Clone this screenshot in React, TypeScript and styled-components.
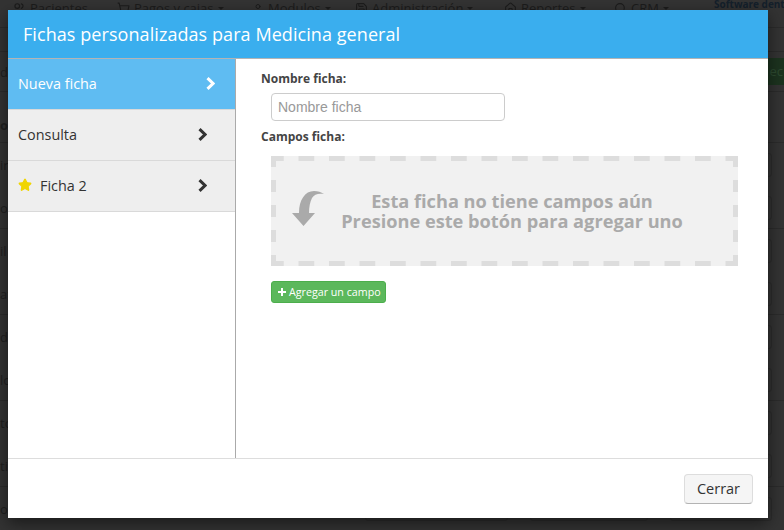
import styled, { createGlobalStyle } from "styled-components";
import { Home, Save, Search, ShoppingCart, Star, User, Users } from "lucide-react";

const GlobalStyle = createGlobalStyle`
  html, body {
    margin: 0;
    height: 100%;
    overflow: hidden;
    background: #333333;
    font-family: "Open Sans", "Liberation Sans", sans-serif;
  }
`;

const Page = styled.div`
  position: relative;
  width: 784px;
  height: 530px;
  overflow: hidden;
  color: #1f1f1f;
  background: #333333;
`;

const TopNav = styled.div`
  display: flex;
  align-items: flex-start;
  height: 28px;
  padding: 1px 0 0 12px;
  box-sizing: border-box;
  border-bottom: 1px solid #2b2b2b;
  font-size: 13px;
  line-height: 15px;
`;

const NavItem = styled.div<{ $width: number }>`
  display: flex;
  flex: none;
  align-items: center;
  gap: 4px;
  width: ${({ $width }) => $width}px;
  color: #1c1c1c;
`;

const Caret = styled.span`
  width: 0;
  height: 0;
  border: 3px solid transparent;
  border-top-color: #1c1c1c;
  border-bottom: 0;
`;

const Brand = styled.div`
  flex: none;
  margin: -1px 0 0 40px;
  font-size: 10px;
  font-weight: 700;
  line-height: 8px;
  white-space: nowrap;
  color: #14202b;
`;

const SubBar = styled.div`
  height: 24px;
  box-sizing: border-box;
  border-bottom: 1px solid #2b2b2b;
`;

const BannerRow = styled.div`
  display: flex;
  align-items: center;
  justify-content: space-between;
  height: 40px;
  box-sizing: border-box;
  border-bottom: 1px solid #2b2b2b;
  font-size: 13px;
`;

const Banner = styled.div`
  width: 100px;
  height: 27px;
  box-sizing: border-box;
  padding-right: 1px;
  font-size: 13px;
  line-height: 27px;
  text-align: right;
  color: #2d4a30;
  background: #1c331f;
`;

const HeadRow = styled.div`
  display: flex;
  align-items: flex-end;
  height: 51px;
  padding-bottom: 8px;
  box-sizing: border-box;
  border-bottom: 1px solid #2b2b2b;
  font-size: 13px;
  font-weight: 700;
`;

const Group = styled.div`
  height: 86px;
  box-sizing: border-box;
  border-bottom: 1px solid #2b2b2b;
`;

const Line = styled.div`
  display: flex;
  height: 43px;
  padding-top: 10px;
  box-sizing: border-box;
`;

const LineLabel = styled.span`
  flex: none;
  width: 365px;
  font-size: 13px;
  line-height: 24px;
`;

const Card = styled.div<{ $width: number }>`
  flex: none;
  width: ${({ $width }) => $width}px;
  height: 24px;
  margin-right: 22px;
  box-sizing: border-box;
  border: 1px solid #2c2c2c;
  border-radius: 3px;
`;

const Modal = styled.div`
  position: absolute;
  top: 10px;
  left: 8px;
  display: flex;
  flex-direction: column;
  width: 760px;
  height: 508px;
  background: #ffffff;
  box-shadow: 0 5px 15px rgba(0, 0, 0, 0.5);
`;

const Header = styled.header`
  display: flex;
  flex: none;
  align-items: center;
  height: 49px;
  padding-left: 15px;
  box-sizing: border-box;
  border-bottom: 1px solid #b4b4b4;
  font-size: 18px;
  letter-spacing: 0.07px;
  color: #ffffff;
  background: #3aaeee;
`;

const Body = styled.div`
  display: flex;
  flex: 1;
  min-height: 0;
`;

const Sidebar = styled.nav`
  width: 228px;
  box-sizing: border-box;
  border-right: 1px solid #aaaaaa;
`;

const SideItem = styled.div<{ $active?: boolean }>`
  display: flex;
  align-items: center;
  height: 51px;
  padding: 0 ${({ $active }) => ($active ? 20 : 28)}px 2px 10px;
  box-sizing: border-box;
  border-bottom: 1px solid #d9d9d9;
  font-size: 14.4px;
  color: ${({ $active }) => ($active ? "#ffffff" : "#333333")};
  background: ${({ $active }) => ($active ? "#5fbcf2" : "#eeeeee")};
`;

const SideLabel = styled.span`
  flex: 1;
`;

const StarIcon = styled(Star)`
  margin-right: 8px;
  color: #f0d500;
  fill: #f0d500;
`;

const Content = styled.main`
  flex: 1;
  padding: 11px 30px 0 25px;
`;

const FieldLabel = styled.div`
  margin-bottom: 6px;
  font-size: 12px;
  font-weight: 700;
  line-height: 17px;
  color: #444444;
`;

const NameInput = styled.input`
  display: block;
  width: 234px;
  height: 28px;
  margin: 0 0 7px 10px;
  padding: 0 6px;
  box-sizing: border-box;
  border: 1px solid #cccccc;
  border-radius: 4px;
  font-family: "Liberation Sans", sans-serif;
  font-size: 14px;
  outline: none;

  &::placeholder {
    color: #999999;
    opacity: 1;
  }
`;

const dashEdge = "#dddddd";

const EmptyBox = styled.div`
  display: flex;
  align-items: center;
  width: 467px;
  height: 110px;
  margin: 11px 0 15px 10px;
  padding: 0 40px 0 21px;
  box-sizing: border-box;
  background-color: #f1f1f1;
  background-image:
    linear-gradient(to right, ${dashEdge} 50%, transparent 50%),
    linear-gradient(to right, ${dashEdge} 50%, transparent 50%),
    linear-gradient(to bottom, ${dashEdge} 50%, transparent 50%),
    linear-gradient(to bottom, ${dashEdge} 50%, transparent 50%);
  background-size:
    30.5px 5px,
    30.5px 5px,
    5px 25px,
    5px 25px;
  background-position:
    -3px 0,
    -3px 100%,
    0 -1px,
    100% -1px;
  background-repeat: repeat-x, repeat-x, repeat-y, repeat-y;
`;

const ArrowSvg = styled.svg`
  flex: none;
  margin-bottom: 6px;
`;

const EmptyText = styled.div`
  flex: 1;
  font-size: 18.2px;
  font-weight: 700;
  line-height: 20px;
  white-space: nowrap;
  text-align: center;
  color: #aaaaaa;
`;

const AddButton = styled.button`
  display: flex;
  align-items: center;
  gap: 3px;
  height: 22px;
  margin-left: 10px;
  padding: 0 4px 0 6px;
  border: 1px solid #4cae4c;
  border-radius: 3px;
  font-family: inherit;
  font-size: 10.7px;
  color: #ffffff;
  background: #5cb85c;
`;

const Footer = styled.footer`
  display: flex;
  flex: none;
  align-items: center;
  justify-content: flex-end;
  height: 60px;
  padding-right: 15px;
  box-sizing: border-box;
  border-top: 1px solid #dddddd;
`;

const CloseButton = styled.button`
  width: 69px;
  height: 30px;
  border: 1px solid #dddddd;
  border-bottom-color: #b3b3b3;
  border-radius: 4px;
  font-family: inherit;
  font-size: 14.5px;
  color: #333333;
  background: #f5f5f5;
`;

function Chevron() {
  return (
    <svg width="9" height="13" viewBox="0 0 9 13" aria-hidden="true">
      <path d="M1.5 1.2 7 6.5 1.5 11.8" fill="none" stroke="currentColor" strokeWidth="3" />
    </svg>
  );
}

function PlusGlyph() {
  return (
    <svg width="8" height="8" viewBox="0 0 8 8" aria-hidden="true">
      <path fill="#ffffff" d="M3 0h2v3h3v2H5v3H3V5H0V3h3z" />
    </svg>
  );
}

function CurvedArrow() {
  return (
    <ArrowSvg width="34" height="37" viewBox="0 0 34 37" aria-hidden="true">
      <path
        fill="#aaaaaa"
        d="M0 23H7C7 10 13 1 22 1c4 0 7 1 10 3-5-1-10 0-12 4-2 4-3 9-3 15h6L11.5 36Z"
      />
    </ArrowSvg>
  );
}

const groups = [
  ["ir", "ol"],
  ["il", "at"],
  ["do", "lo"],
  ["to", "tic"],
  ["ol", ""],
];

export default function App() {
  return (
    <Page>
      <GlobalStyle />
      <TopNav>
        <NavItem $width={105}>
          <Users size={14} />
          Pacientes
        </NavItem>
        <NavItem $width={135}>
          <ShoppingCart size={13} />
          Pagos y cajas
          <Caret />
        </NavItem>
        <NavItem $width={103}>
          <User size={12} />
          Modulos
          <Caret />
        </NavItem>
        <NavItem $width={149}>
          <Save size={13} />
          Administración
          <Caret />
        </NavItem>
        <NavItem $width={110}>
          <Home size={13} />
          Reportes
          <Caret />
        </NavItem>
        <NavItem $width={60}>
          <Search size={13} />
          CRM
          <Caret />
        </NavItem>
        <Brand>Software dental</Brand>
      </TopNav>
      <SubBar />
      <BannerRow>
        <span>de</span>
        <Banner>ec</Banner>
      </BannerRow>
      <HeadRow>or</HeadRow>
      {groups.map((labels, index) => (
        <Group key={index}>
          {labels.map((label, lineIndex) => (
            <Line key={lineIndex}>
              <LineLabel>{label}</LineLabel>
              <Card $width={143} />
              <Card $width={118} />
              <Card $width={102} />
            </Line>
          ))}
        </Group>
      ))}
      <Modal>
        <Header>Fichas personalizadas para Medicina general</Header>
        <Body>
          <Sidebar>
            <SideItem $active>
              <SideLabel>Nueva ficha</SideLabel>
              <Chevron />
            </SideItem>
            <SideItem>
              <SideLabel>Consulta</SideLabel>
              <Chevron />
            </SideItem>
            <SideItem>
              <StarIcon size={14} />
              <SideLabel>Ficha 2</SideLabel>
              <Chevron />
            </SideItem>
          </Sidebar>
          <Content>
            <FieldLabel>Nombre ficha:</FieldLabel>
            <NameInput placeholder="Nombre ficha" />
            <FieldLabel>Campos ficha:</FieldLabel>
            <EmptyBox>
              <CurvedArrow />
              <EmptyText>
                Esta ficha no tiene campos aún
                <br />
                Presione este botón para agregar uno
              </EmptyText>
            </EmptyBox>
            <AddButton>
              <PlusGlyph />
              Agregar un campo
            </AddButton>
          </Content>
        </Body>
        <Footer>
          <CloseButton>Cerrar</CloseButton>
        </Footer>
      </Modal>
    </Page>
  );
}
